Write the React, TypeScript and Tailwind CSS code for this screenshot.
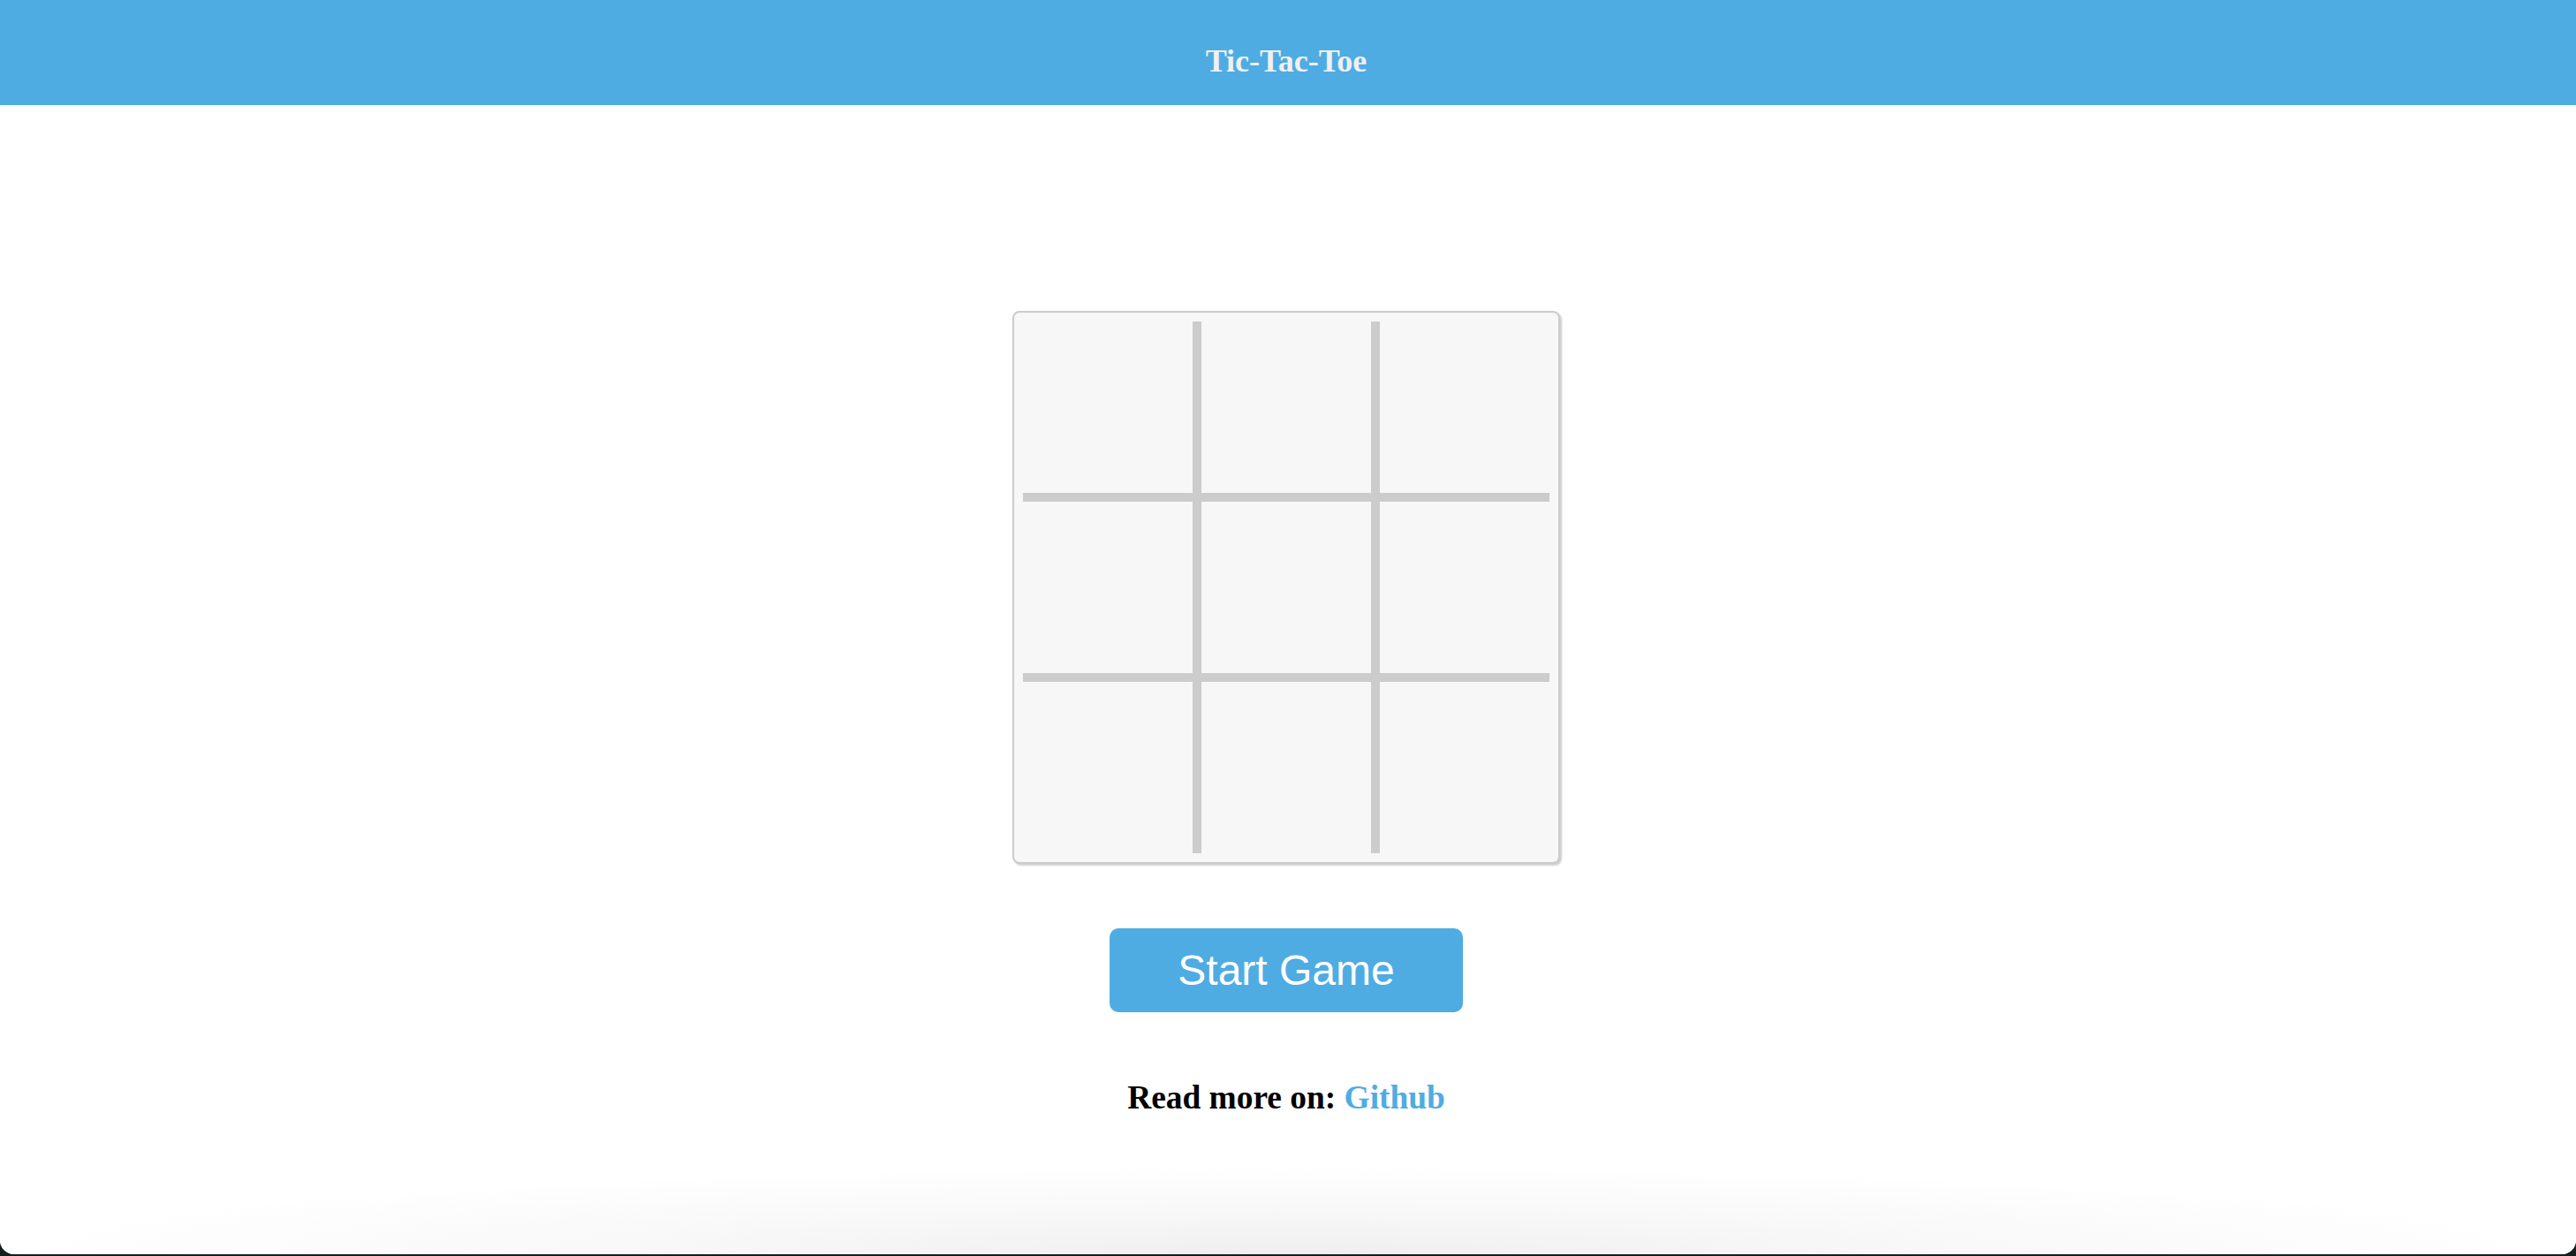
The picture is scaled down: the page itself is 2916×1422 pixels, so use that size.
import React, { useState } from "react";

type Cell = "X" | "O" | null;

const Board: React.FC<{ cells: Cell[]; onPlay: (i: number) => void }> = ({ cells, onPlay }) => {
    return (
        <div className="mt-[233px] rounded-[8px] border-2 border-[#cccccc] bg-[#f7f7f7] p-[10px] shadow-[2px_2px_2px_#cfcfcf]">
            <div className="grid grid-cols-[192px_192px_192px] grid-rows-[194px_194px_194px] gap-[10px] bg-[#cccccc]">
                {cells.map((cell, i) => (
                    <div
                        key={i}
                        onClick={() => onPlay(i)}
                        className="flex items-center justify-center bg-[#f7f7f7] text-[96px] text-[#4face3] font-['Liberation_Sans',sans-serif]"
                    >
                        {cell}
                    </div>
                ))}
            </div>
        </div>
    );
};

const App: React.FC = () => {
    const [cells, setCells] = useState<Cell[]>(Array(9).fill(null));
    const [started, setStarted] = useState(false);
    const [turn, setTurn] = useState<"X" | "O">("X");

    const play = (i: number) => {
        if (!started || cells[i]) return;
        const next = [...cells];
        next[i] = turn;
        setCells(next);
        setTurn(turn === "X" ? "O" : "X");
    };

    const startGame = () => {
        setCells(Array(9).fill(null));
        setTurn("X");
        setStarted(true);
    };

    return (
        <div className="h-[1422px] overflow-hidden bg-[#15201e]">
            <div className="flex h-[1420px] flex-col overflow-hidden rounded-b-[16px] bg-white">
                <header className="h-[119px] shrink-0 bg-[#4face3] pt-[49px] pr-[4px] text-center">
                    <h1 className="text-[36px] leading-[41px] font-bold text-[#f0f0f0] font-['Liberation_Serif',serif]">
                        Tic-Tac-Toe
                    </h1>
                </header>

                <main className="flex flex-1 flex-col items-center pr-[4px]">
                    <Board cells={cells} onPlay={play} />

                    <button
                        onClick={startGame}
                        className="mt-[73px] h-[95px] w-[400px] rounded-[10px] bg-[#4face3] text-[48px] leading-[55px] text-white font-['Liberation_Sans',sans-serif]"
                    >
                        Start Game
                    </button>

                    <h3 className="mt-[76px] text-[37.4px] leading-[42px] font-bold text-black font-['Liberation_Serif',serif]">
                        Read more on: <a className="text-[#4face3]">Github</a>
                    </h3>
                </main>

                {/* soft window shadow along the bottom edge */}
                <div className="h-[100px] shrink-0 bg-[radial-gradient(ellipse_farthest-side_at_bottom,#efeff0_0%,#f8f8f9_50%,#ffffff_100%)]" />
            </div>
        </div>
    );
};

export default App;
